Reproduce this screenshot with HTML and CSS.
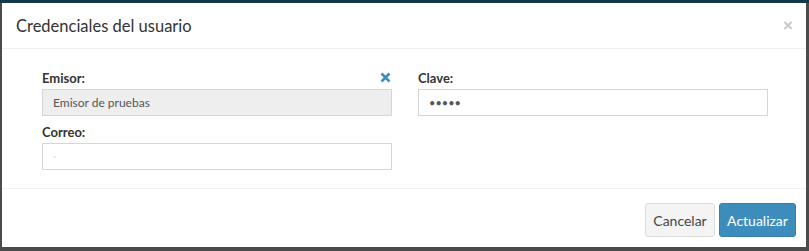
FILE: index.html
```html
<!DOCTYPE html>
<html lang="es">
<head>
    <meta charset="UTF-8">
    <meta name="viewport" content="width=device-width, initial-scale=1.0">
    <title>Credenciales del usuario</title>
    <link rel="stylesheet" href="styles.css">
</head>
<body>
    <div class="modal">
        <div class="modal-header">
            <h4 class="modal-title">Credenciales del usuario</h4>
            <button type="button" class="close">&times;</button>
        </div>

        <div class="modal-body">
            <div class="row">
                <div class="field">
                    <div class="label-row">
                        <label>Emisor:</label>
                        <span class="remove">
                            <svg width="11" height="11" viewBox="0 0 11 11">
                                <path d="M1.5 1.5 L9.5 9.5 M9.5 1.5 L1.5 9.5" stroke="#3c8dbc" stroke-width="2.6"/>
                            </svg>
                        </span>
                    </div>
                    <input type="text" class="form-control" value="Emisor de pruebas" disabled>
                </div>
                <div class="field">
                    <div class="label-row">
                        <label>Clave:</label>
                    </div>
                    <input type="password" class="form-control" value="12345">
                </div>
                <div class="field">
                    <div class="label-row">
                        <label>Correo:</label>
                    </div>
                    <input type="text" class="form-control faint" value="·">
                </div>
            </div>
        </div>

        <div class="modal-footer">
            <button type="button" class="btn btn-default">Cancelar</button>
            <button type="button" class="btn btn-primary">Actualizar</button>
        </div>
    </div>
</body>
</html>
```

FILE: styles.css
```css
* {
    margin: 0;
    padding: 0;
    box-sizing: border-box;
}

body {
    width: 809px;
    height: 251px;
    overflow: hidden;
    font-family: "Lato", sans-serif;
    background: linear-gradient(#15384a 0, #15384a 3px, #4b4b4b 3px);
    padding: 3px 3px 4px 2px;
}

.modal {
    width: 804px;
    height: 244px;
    background: #fff;
    display: flex;
    flex-direction: column;
}

.modal-header {
    height: 46px;
    padding: 0 13px 0 14px;
    border-bottom: 1px solid #f0f0f0;
    display: flex;
    align-items: center;
    justify-content: space-between;
}

.modal-title {
    font-size: 16.5px;
    font-weight: normal;
    color: #333;
}

.close {
    border: none;
    background: none;
    font-family: "Liberation Sans", sans-serif;
    font-size: 17px;
    font-weight: bold;
    color: #c8c8c8;
    margin-top: 0;
}

.modal-body {
    flex: 1;
    padding: 17px 38px 0 40px;
}

.row {
    display: grid;
    grid-template-columns: 350px 350px;
    column-gap: 26px;
    row-gap: 4px;
}

.label-row {
    display: flex;
    justify-content: space-between;
    align-items: center;
    height: 23px;
    padding-right: 1px;
}

label {
    font-size: 13px;
    font-weight: bold;
    color: #333;
}

.remove {
    display: flex;
}

.form-control {
    width: 100%;
    height: 27px;
    border: 1px solid #d2d6de;
    padding: 0 10px;
    font-family: inherit;
    font-size: 12px;
    color: #555;
    background: #fff;
    outline: none;
}

.form-control:disabled {
    background: #eee;
}

input[type="password"] {
    font-size: 11px;
}

.faint {
    color: #ddd;
}

.modal-footer {
    height: 59px;
    border-top: 1px solid #f0f0f0;
    padding: 14px 10px 0 0;
    display: flex;
    justify-content: flex-end;
    align-items: flex-start;
    gap: 4px;
}

.btn {
    height: 34px;
    padding: 0 6px;
    font-family: inherit;
    font-size: 14px;
    border-radius: 3px;
    cursor: pointer;
}

.btn-default {
    width: 70px;
    background: #f4f4f4;
    border: 1px solid #ddd;
    color: #444;
}

.btn-primary {
    width: 77px;
    background: #3c8dbc;
    border: 1px solid #367fa9;
    color: #fff;
}
```
